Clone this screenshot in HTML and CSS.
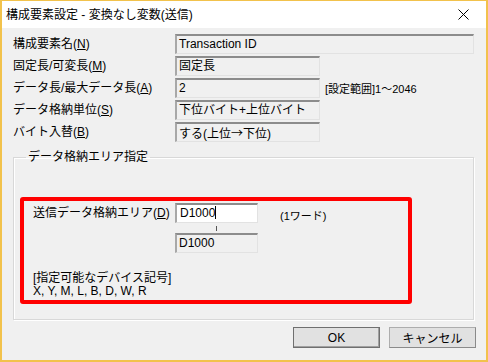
FILE: index.html
```html
<!DOCTYPE html>
<html lang="ja">

<head>
    <meta charset="UTF-8">
    <meta name="viewport" content="width=device-width, initial-scale=1.0">
    <title>構成要素設定 - 変換なし変数(送信)</title>
    <link rel="stylesheet" href="styles.css">
</head>

<body>
    <div class="window">
        <div class="titlebar">
            <span class="title">構成要素設定 - 変換なし変数(送信)</span>
            <span class="close">
                <svg width="11" height="11" viewBox="0 0 11 11">
                    <path d="M0.5 0.5 L10.5 10.5 M10.5 0.5 L0.5 10.5" stroke="#000" stroke-width="1" fill="none" />
                </svg>
            </span>
        </div>
        <div class="content">
            <div class="props">
                <label>構成要素名(<u>N</u>)</label>
                <div class="field wide">Transaction ID</div>

                <label>固定長/可変長(<u>M</u>)</label>
                <div class="field">固定長</div>

                <label>データ長/最大データ長(<u>A</u>)</label>
                <div class="field-row">
                    <div class="field">2</div>
                    <span class="range">[設定範囲]1～2046</span>
                </div>

                <label>データ格納単位(<u>S</u>)</label>
                <div class="field">下位バイト+上位バイト</div>

                <label>バイト入替(<u>B</u>)</label>
                <div class="field">する(上位<span class="cjk">→</span>下位)</div>
            </div>

            <fieldset class="group">
                <legend>データ格納エリア指定</legend>
                <div class="highlight">
                    <div class="area-row">
                        <label class="area-label">送信データ格納エリア(<u>D</u>)</label>
                        <div class="area-fields">
                            <div class="input">D1000<span class="caret"></span></div>
                            <div class="tick"></div>
                            <div class="field small">D1000</div>
                        </div>
                        <span class="unit">(1ワード)</span>
                    </div>
                    <div class="devices">[指定可能なデバイス記号]<br>X, Y, M, L, B, D, W, R</div>
                </div>
            </fieldset>

            <div class="buttons">
                <button class="btn default">OK</button>
                <button class="btn">キャンセル</button>
            </div>
        </div>
    </div>
</body>

</html>
```

FILE: styles.css
```css
* {
    margin: 0;
    padding: 0;
    box-sizing: border-box;
}

body {
    font-family: "Liberation Sans", "Noto Sans CJK JP", sans-serif;
    font-size: 12px;
    color: #000;
    background: #fff;
}

.cjk {
    font-family: "Noto Sans CJK JP", sans-serif;
}

.window {
    width: 488px;
    height: 362px;
    border: 2px solid #f2c24c;
    border-top-width: 1px;
    display: flex;
    flex-direction: column;
    background: #f0f0f0;
}

.titlebar {
    height: 27px;
    background: #fff;
    display: flex;
    align-items: center;
    justify-content: space-between;
    padding: 0 17px 0 4px;
}

.title {
    font-size: 12px;
    line-height: 14px;
}

.close {
    display: flex;
}

.content {
    flex: 1;
    padding: 5px 11px 0 11px;
}

.props {
    display: grid;
    grid-template-columns: 162px 1fr;
    grid-auto-rows: 22px;
    align-items: center;
}

label {
    line-height: 14px;
    white-space: nowrap;
}

.field {
    height: 20px;
    width: 145px;
    line-height: 17px;
    padding-left: 2px;
    background: #f0f0f0;
    border-top: 2px solid #8c8c8c;
    border-left: 2px solid #a8a8a8;
    border-right: 1px solid #e2e2e2;
    border-bottom: 1px solid #e2e2e2;
    white-space: nowrap;
    overflow: hidden;
}

.field.wide {
    width: 299px;
}

.field-row {
    display: flex;
    align-items: center;
}

.range {
    margin-left: 5px;
    font-size: 11px;
}

.group {
    margin-top: 6px;
    width: 461px;
    border: 1px solid #d8d8d8;
    box-shadow: inset 1px 1px 0 #fff, 1px 1px 0 #fff;
    padding: 32px 0 15px 6px;
}

.group legend {
    margin-left: 6px;
    padding: 0 2px;
    line-height: 16px;
}

.highlight {
    width: 392px;
    height: 107px;
    border: 4px solid #ff0000;
    border-radius: 3px;
    padding: 2px 0 0 9px;
}

.area-row {
    display: flex;
    align-items: flex-start;
}

.area-label {
    width: 142px;
    line-height: 20px;
}

.area-fields {
    width: 83px;
    display: flex;
    flex-direction: column;
}

.area-fields .field {
    width: 83px;
}

.input {
    height: 20px;
    line-height: 17px;
    padding-left: 3px;
    background: #fff;
    border-top: 2px solid #8c8c8c;
    border-left: 2px solid #a8a8a8;
    border-right: 1px solid #e2e2e2;
    border-bottom: 1px solid #e2e2e2;
}

.caret {
    display: inline-block;
    width: 1px;
    height: 13px;
    background: #000;
    vertical-align: -2px;
}

.tick {
    width: 1px;
    height: 5px;
    margin: 3px auto 2px;
    background: #555;
}

.unit {
    margin: 4px 0 0 22px;
    font-size: 11px;
}

.devices {
    margin-top: 19px;
    line-height: 13px;
}

.buttons {
    display: flex;
    justify-content: flex-end;
    gap: 9px;
    margin-top: 7px;
    margin-right: -1px;
}

.btn {
    width: 87px;
    height: 21px;
    font-family: inherit;
    font-size: 12px;
    background: #e1e1e1;
    border: 1px solid #adadad;
    border-right-color: #8a8a8a;
    border-bottom-color: #8a8a8a;
}

.btn.default {
    border: 1px solid #6f6f6f;
    box-shadow: inset -1px -1px 0 #a0a0a0;
}
```
